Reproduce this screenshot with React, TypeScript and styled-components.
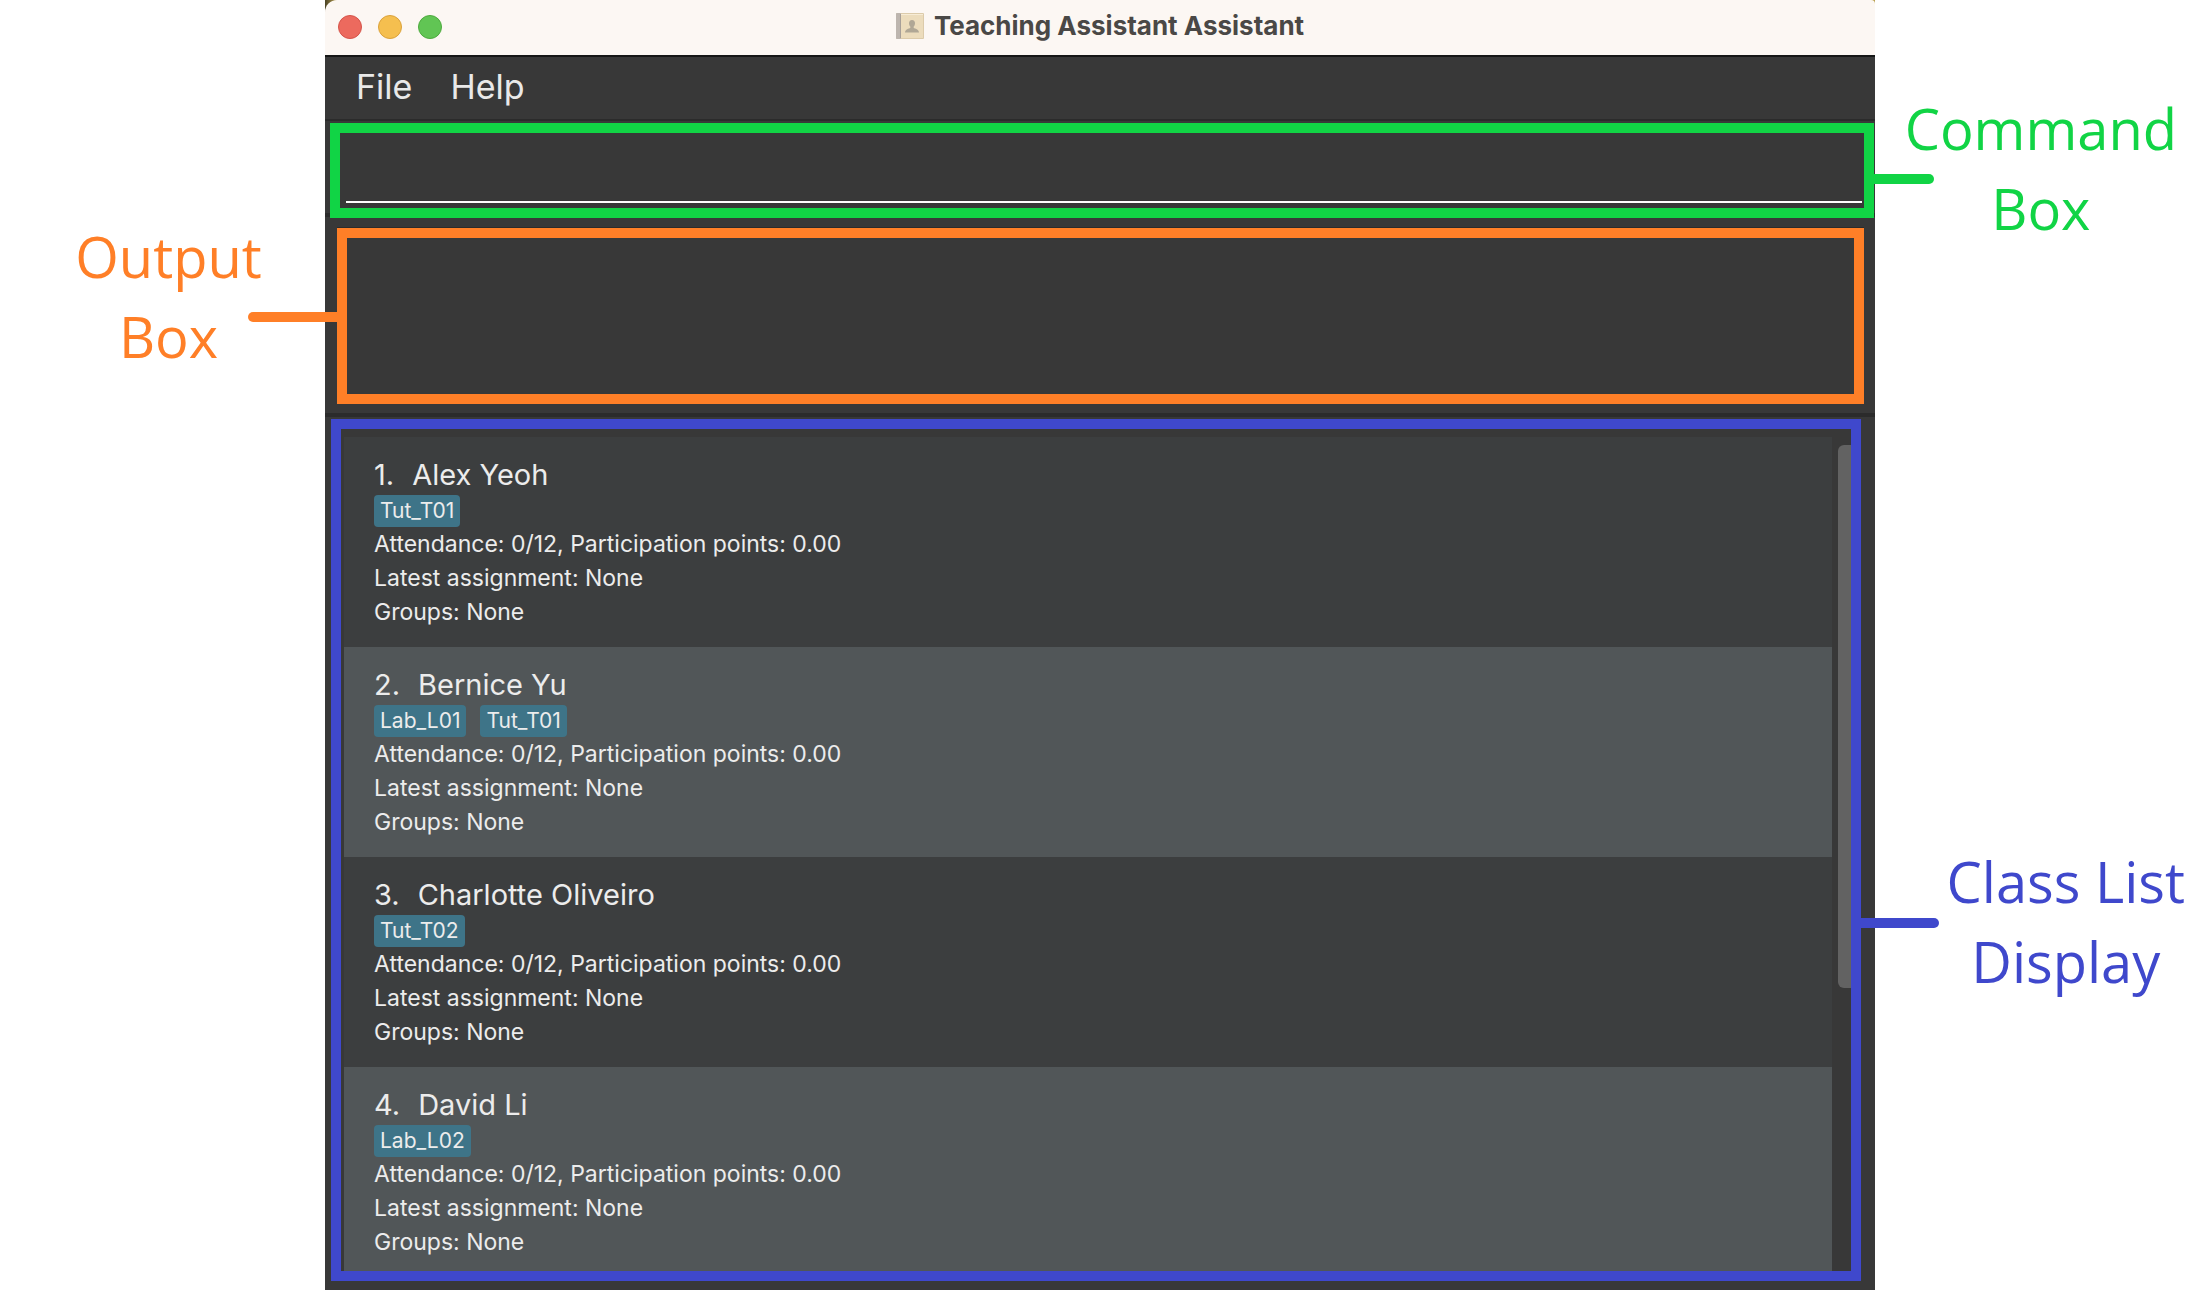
import React from "react";
import styled, { createGlobalStyle } from "styled-components";

const GREEN = "#11d445";
const ORANGE = "#ff7f27";
const BLUE = "#3f48cc";
const PANEL = "#383838";
const DIVIDER = "#2b2b2b";

const GlobalStyle = createGlobalStyle`
  *, *::before, *::after { box-sizing: border-box; }
  body { margin: 0; background: #fff; }
`;

const Page = styled.div`
  display: grid;
  grid-template-columns: 325px minmax(0, 1fr) 325px;
  height: 100vh;
  overflow: hidden;
  font-family: Inter, Roboto, sans-serif;
`;

const LabelColumn = styled.aside<{ $top: number; $side: "left" | "right" }>`
  display: flex;
  flex-direction: column;
  align-items: ${(p) => (p.$side === "left" ? "center" : "flex-end")};
  gap: 593px;
  padding: ${(p) => p.$top}px ${(p) => (p.$side === "left" ? 0 : 15)}px 0
    ${(p) => (p.$side === "left" ? 12 : 0)}px;
`;

const Label = styled.p<{ $color: string; $inset?: number }>`
  margin: 0;
  padding-inline: ${(p) => p.$inset ?? 0}px;
  font: 400 56px/80px "Open Sans", "Noto Sans", sans-serif;
  color: ${(p) => p.$color};
  text-align: center;
`;

const Window = styled.main`
  display: flex;
  flex-direction: column;
  min-height: 0;
  background: ${PANEL};
`;

const TitleBacking = styled.div`
  background: linear-gradient(90deg, #4a4326, #b9a04f 12px);
`;

const TitleBar = styled.header`
  display: grid;
  grid-template-columns: 1fr auto 1fr;
  align-items: center;
  height: 57px;
  padding: 0 13px 2px;
  border-bottom: 2px solid #161616;
  border-radius: 12px 4px 0 0;
  background: #fcf7f3;
`;

const Lights = styled.div`
  display: flex;
  gap: 16px;
`;

const Light = styled.button<{ $fill: string; $edge: string }>`
  width: 24px;
  height: 24px;
  padding: 0;
  border: 1px solid ${(p) => p.$edge};
  border-radius: 50%;
  background: ${(p) => p.$fill};
`;

const Title = styled.h1`
  display: flex;
  align-items: center;
  gap: 10px;
  margin: 0;
  padding-bottom: 2px;
  font-size: 26px;
  font-weight: 700;
  line-height: 32px;
  color: #4a4846;
`;

const MenuBar = styled.nav`
  display: flex;
  gap: 38px;
  padding: 6px 31px 8px;
  border-bottom: 2px solid ${DIVIDER};
`;

const MenuButton = styled.button`
  padding: 0;
  border: 0;
  background: none;
  font: inherit;
  font-size: 34px;
  line-height: 48px;
  color: #e9e9e9;
`;

const CommandPane = styled.div`
  padding: 2px 1px 0 5px;
  border-bottom: 4px solid ${DIVIDER};
`;

const Frame = styled.section<{ $color: string }>`
  position: relative;
  border: 10px solid ${(p) => p.$color};
`;

const CommandFrame = styled(Frame)`
  height: 95px;
  margin-bottom: -5px;
  padding: 0 2px 5px 6px;
`;

const CommandInput = styled.input`
  display: block;
  width: 100%;
  height: 100%;
  padding: 0;
  border: 0;
  border-bottom: 2px solid #fff;
  outline: 0;
  background: transparent;
  font: inherit;
  font-size: 23px;
  color: #fff;
`;

const OutputPane = styled.div`
  padding: 11px 11px 9px 12px;
  border-bottom: 4px solid ${DIVIDER};
`;

const OutputFrame = styled(Frame)`
  height: 176px;
  box-shadow: 0 -1px 0 ${DIVIDER};
`;

const OutputText = styled.textarea`
  display: block;
  width: 100%;
  height: 100%;
  padding: 8px;
  border: 0;
  outline: 0;
  resize: none;
  background: transparent;
  font: inherit;
  font-size: 23px;
  color: #fff;
`;

const ListPane = styled.div`
  display: flex;
  flex: 1;
  min-height: 0;
  padding: 2px 14px 9px 6px;
`;

const ListFrame = styled(Frame)`
  display: flex;
  flex: 1;
  gap: 6px;
  min-width: 0;
  padding-left: 3px;
`;

const StudentList = styled.ol`
  flex: 1;
  margin: 8px 0 0;
  padding: 0;
  overflow: hidden;
  list-style: none;
`;

const Student = styled.li`
  padding: 18px 30px;
  background: #3c3e3f;
  color: #ececec;

  &:nth-child(even) {
    background: #515658;
  }
`;

const StudentName = styled.h2`
  display: flex;
  gap: 18px;
  margin: 0;
  font-size: 29px;
  font-weight: 400;
  line-height: 40px;
`;

const Tags = styled.div`
  display: flex;
  gap: 14px;
`;

const Tag = styled.span`
  padding: 0 6px;
  border-radius: 4px;
  background: #3e7488;
  font-size: 21px;
  line-height: 32px;
`;

const Detail = styled.p`
  margin: 0;
  font-size: 23px;
  line-height: 34px;
`;

const ScrollTrack = styled.div`
  width: 13px;
  padding: 16px 0;
`;

const ScrollThumb = styled.div`
  height: 67%;
  border-radius: 6px 0 0 6px;
  background: #626262;
`;

const Connector = styled.span<{
  $color: string;
  $side: "left" | "right";
  $top: number;
  $length: number;
}>`
  position: absolute;
  top: ${(p) => p.$top}px;
  ${(p) => p.$side}: -${(p) => p.$length}px;
  width: ${(p) => p.$length}px;
  height: 10px;
  border-radius: ${(p) => (p.$side === "left" ? "5px 0 0 5px" : "0 5px 5px 0")};
  background: ${(p) => p.$color};
`;

const BookIcon = () => (
  <svg width="28" height="26" viewBox="0 0 28 26" aria-hidden="true">
    <rect x="0" y="0" width="28" height="26" rx="1" fill="#dccbaa" />
    <rect x="5" y="1" width="22" height="24" fill="#ecdcbc" />
    <rect x="5" y="1" width="22" height="1" fill="#f7ecd6" />
    <rect x="0" y="0" width="5" height="26" rx="1" fill="#bdb5ae" />
    <rect x="4" y="1" width="1" height="24" fill="#a79f98" />
    <path
      d="M16 7c2 0 3 1.400 3 3.300 0 1.500-.6 2.500-1.300 3.300v1.500c1.500.8 5 1 5.300 4.400H9c.3-3.400 3.800-3.600 5.300-4.400v-1.500c-.7-.8-1.300-1.800-1.300-3.300C13 8.400 14 7 16 7z"
      fill="#b0a795"
    />
  </svg>
);

const students = [
  { name: "Alex Yeoh", tags: ["Tut_T01"] },
  { name: "Bernice Yu", tags: ["Lab_L01", "Tut_T01"] },
  { name: "Charlotte Oliveiro", tags: ["Tut_T02"] },
  { name: "David Li", tags: ["Lab_L02"] },
];

export default function App() {
  return (
    <Page>
      <GlobalStyle />
      <LabelColumn $top={216} $side="left">
        <Label $color={ORANGE}>
          Output
          <br />
          Box
        </Label>
      </LabelColumn>

      <Window>
        <TitleBacking>
          <TitleBar>
            <Lights>
              <Light aria-label="Close" $fill="#ec6a5e" $edge="#d5544a" />
              <Light aria-label="Minimize" $fill="#f5bf4f" $edge="#dba23b" />
              <Light aria-label="Zoom" $fill="#61c554" $edge="#4daa3e" />
            </Lights>
            <Title>
              <BookIcon />
              Teaching Assistant Assistant
            </Title>
          </TitleBar>
        </TitleBacking>

        <MenuBar>
          <MenuButton>File</MenuButton>
          <MenuButton>Help</MenuButton>
        </MenuBar>

        <CommandPane>
          <CommandFrame $color={GREEN}>
            <CommandInput aria-label="Command" />
            <Connector $color={GREEN} $side="right" $top={41} $length={70} />
          </CommandFrame>
        </CommandPane>

        <OutputPane>
          <OutputFrame $color={ORANGE}>
            <OutputText aria-label="Output" readOnly />
            <Connector $color={ORANGE} $side="left" $top={74} $length={99} />
          </OutputFrame>
        </OutputPane>

        <ListPane>
          <ListFrame $color={BLUE}>
            <StudentList>
              {students.map((student, index) => (
                <Student key={student.name}>
                  <StudentName>
                    <span>{index + 1}.</span>
                    <span>{student.name}</span>
                  </StudentName>
                  <Tags>
                    {student.tags.map((tag) => (
                      <Tag key={tag}>{tag}</Tag>
                    ))}
                  </Tags>
                  <Detail>Attendance: 0/12, Participation points: 0.00</Detail>
                  <Detail>Latest assignment: None</Detail>
                  <Detail>Groups: None</Detail>
                </Student>
              ))}
            </StudentList>
            <ScrollTrack>
              <ScrollThumb />
            </ScrollTrack>
            <Connector $color={BLUE} $side="right" $top={489} $length={88} />
          </ListFrame>
        </ListPane>
      </Window>

      <LabelColumn $top={88} $side="right">
        <Label $color={GREEN} $inset={8}>
          Command
          <br />
          Box
        </Label>
        <Label $color={BLUE}>
          Class List
          <br />
          Display
        </Label>
      </LabelColumn>
    </Page>
  );
}
